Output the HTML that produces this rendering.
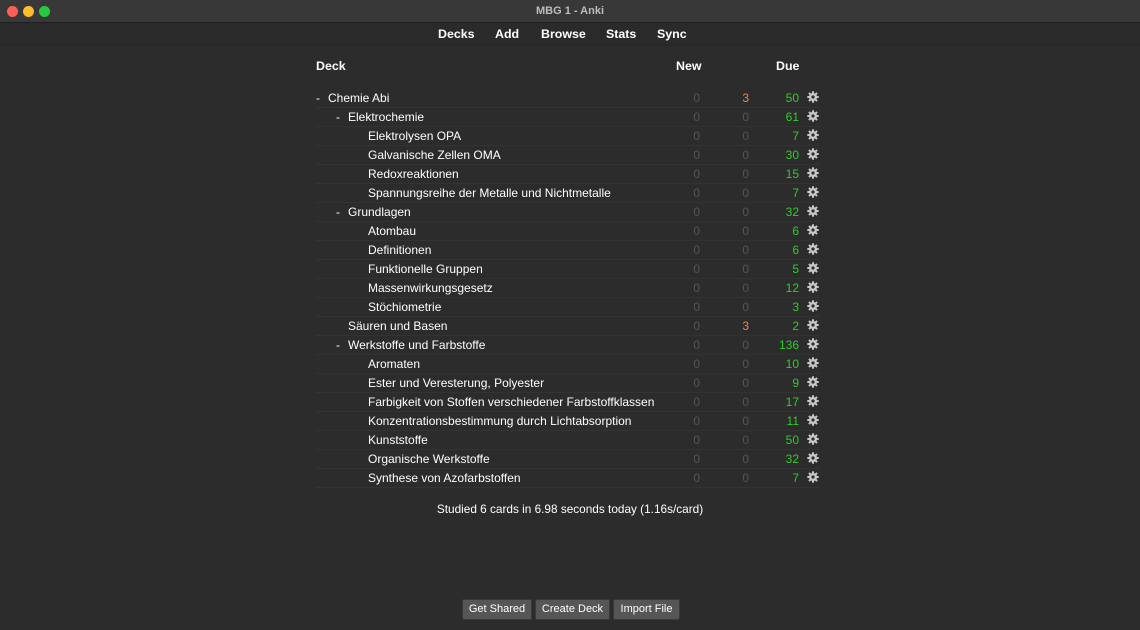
<!DOCTYPE html><html><head><style>
body{margin:0;width:1140px;height:630px;background:#2c2c2c;font-family:"Liberation Sans",Arial,sans-serif;overflow:hidden;position:relative;color:#fff}
.tb{position:absolute;left:0;top:0;width:1140px;height:22px;background:#383838;border-bottom:1px solid #1e1e1e}
.tb .t{position:absolute;width:100%;text-align:center;top:5px;font-size:11px;color:#bdbdbd;font-weight:bold}
.dot{position:absolute;top:6px;width:11px;height:11px;border-radius:50%}
.nav{position:absolute;top:23px;left:0;width:1140px;height:22px;background:#2a2a2a;border-bottom:1px solid #262626}
.nav span{position:absolute;top:4px;font-size:12.4px;font-weight:bold}
.h{position:absolute;top:59px;font-size:12.4px;font-weight:bold}
.r{position:absolute;left:316px;width:504px;height:19px;border-bottom:1px solid #333;font-size:12px}
.r div{position:absolute;top:3px}
.n{right:120px;color:#555}.l{right:71px;color:#555}.d{right:21px;color:#2ecc2e}
.o{color:#f08050!important}
.g{position:absolute;right:1px;top:3px;width:12px;height:12px}
.btn{position:absolute;top:599px;height:19px;background:#565656;border:1px solid #3a3a3a;border-radius:2px;font-size:11px;text-align:center;line-height:19px}
</style></head><body>
<div class="tb"><div class="dot" style="left:7px;background:#fe5f57"></div><div class="dot" style="left:23px;background:#febc2e"></div><div class="dot" style="left:39px;background:#28c840"></div><div class="t">MBG 1 - Anki</div></div>
<div class="nav"><span style="left:438px">Decks</span><span style="left:495px">Add</span><span style="left:541px">Browse</span><span style="left:606px">Stats</span><span style="left:657px">Sync</span></div>
<div class="h" style="left:316px">Deck</div><div class="h" style="left:676px">New</div><div class="h" style="left:776px">Due</div>
<div id="rows"></div>
<div style="position:absolute;top:502px;width:1140px;text-align:center;font-size:11.8px">Studied 6 cards in 6.98 seconds today (1.16s/card)</div>
<div class="btn" style="left:462px;width:68px">Get Shared</div>
<div class="btn" style="left:535px;width:73px">Create Deck</div>
<div class="btn" style="left:613px;width:65px">Import File</div>
<script>
var gear='<svg class="g" viewBox="0 0 12 12"><g fill="#c8c8c8"><circle cx="6" cy="6" r="4"/>'+[0,45,90,135].map(function(a){return '<rect x="5" y="0.3" width="2" height="11.4" transform="rotate('+a+' 6 6)"/>'}).join('')+'</g><circle cx="6" cy="6" r="1.6" fill="#2c2c2c"/></svg>';
var d=[[0,"-","Chemie Abi",3,50],[1,"-","Elektrochemie",0,61],[2,"","Elektrolysen OPA",0,7],[2,"","Galvanische Zellen OMA",0,30],[2,"","Redoxreaktionen",0,15],[2,"","Spannungsreihe der Metalle und Nichtmetalle",0,7],[1,"-","Grundlagen",0,32],[2,"","Atombau",0,6],[2,"","Definitionen",0,6],[2,"","Funktionelle Gruppen",0,5],[2,"","Massenwirkungsgesetz",0,12],[2,"","Stöchiometrie",0,3],[1,"","Säuren und Basen",3,2],[1,"-","Werkstoffe und Farbstoffe",0,136],[2,"","Aromaten",0,10],[2,"","Ester und Veresterung, Polyester",0,9],[2,"","Farbigkeit von Stoffen verschiedener Farbstoffklassen",0,17],[2,"","Konzentrationsbestimmung durch Lichtabsorption",0,11],[2,"","Kunststoffe",0,50],[2,"","Organische Werkstoffe",0,32],[2,"","Synthese von Azofarbstoffen",0,7]];
var h="";d.forEach(function(x,i){var t=88+19*i;h+='<div class="r" style="top:'+t+'px">'+(x[1]?'<div style="left:'+(x[0]*20)+'px">-</div>':'')+'<div style="left:'+(12+x[0]*20)+'px">'+x[2]+'</div><div class="n">0</div><div class="l'+(x[3]?' o':'')+'">'+x[3]+'</div><div class="d">'+x[4]+'</div>'+gear+'</div>';});
document.getElementById("rows").innerHTML=h;
</script></body></html>
